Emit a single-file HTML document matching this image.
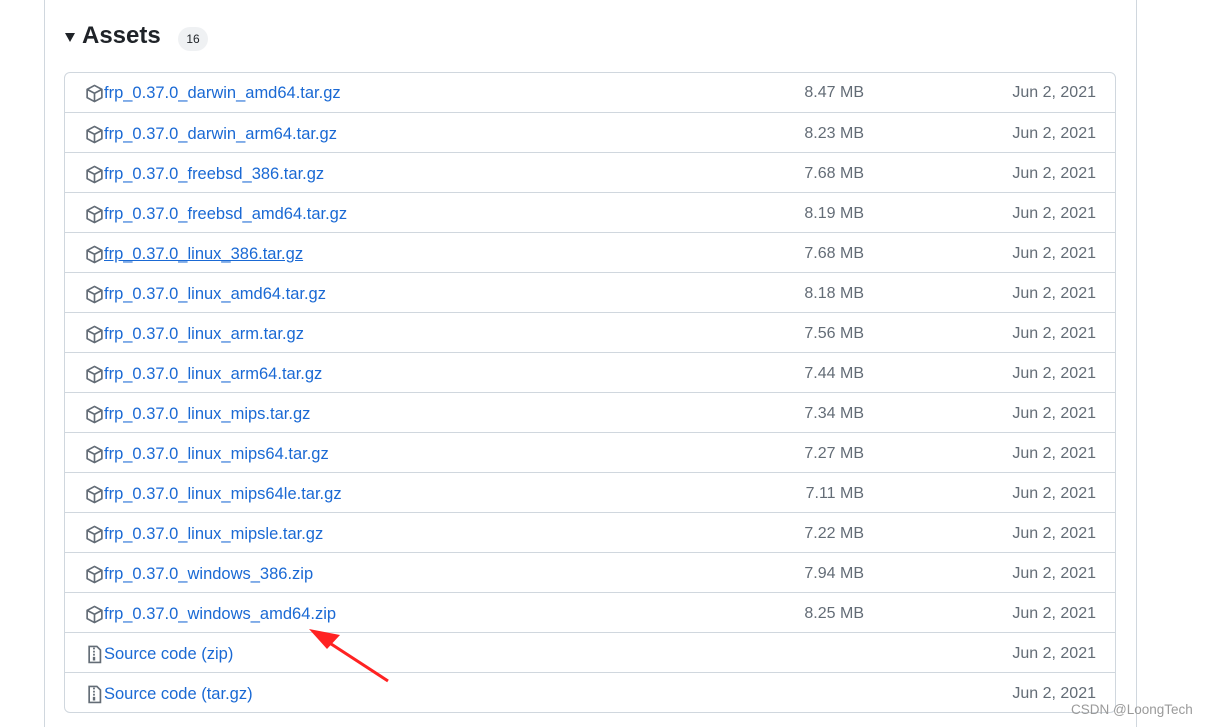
<!DOCTYPE html>
<html><head><meta charset="utf-8"><style>
body{margin:0;width:1212px;height:727px;background:#fff;position:relative;overflow:hidden;font-family:"Liberation Sans",sans-serif;}
.ol{position:absolute;left:44px;top:0;width:1px;height:727px;background:#d0d7de}
.or{position:absolute;left:1136px;top:0;width:1px;height:727px;background:#d0d7de}
.h{position:absolute;left:82px;top:22px;font-size:24px;color:#1f2328;font-weight:600}
.tri{position:absolute;left:65px;top:33px;width:0;height:0;border-left:5px solid transparent;border-right:5px solid transparent;border-top:9px solid #1f2328}
.badge{position:absolute;left:178px;top:27px;width:30px;height:24px;border-radius:12px;background:#eff1f3;font-size:12px;text-align:center;line-height:24px;color:#1f2328}
.box{position:absolute;left:64px;top:72px;width:1050px;height:639px;border:1px solid #d0d7de;border-radius:6px}
.row{position:absolute;left:0;width:1050px;height:40px;border-top:1px solid #d0d7de}
.ic{position:absolute;left:20px;top:12px}
.n{position:absolute;left:39px;top:12px;font-size:16.5px;color:#1a69d4}
.s{position:absolute;right:251px;top:12px;font-size:16px;color:#636c76}
.d{position:absolute;right:19px;top:12px;font-size:16px;color:#636c76}
.wm{position:absolute;left:1071px;top:702px;font-size:13.5px;color:#9a9a9a}
</style></head><body>
<div class="ol"></div><div class="or"></div>
<div class="tri"></div><div class="h">Assets</div>
<div class="badge">16</div>
<div class="box">
<div id="rows"></div>
</div>
<svg width="1212" height="727" style="position:absolute;left:0;top:0">
<line x1="388" y1="681" x2="325" y2="640" stroke="#f22" stroke-width="3"/>
<polygon points="309,629 340,635 327,649" fill="#f22"/>
</svg>
<div class="wm">CSDN @LoongTech</div>
<script>
var pk='<svg class="ic" width="19" height="19" viewBox="0 0 16 16"><path d="M8 1.2 14.2 4.5v7L8 14.8 1.8 11.5v-7Z M1.8 4.5 8 7.8 14.2 4.5 M8 7.8v7" fill="none" stroke="#636c76" stroke-width="1.4" stroke-linejoin="round"/></svg>';
var zp='<svg class="ic" width="19" height="19" viewBox="0 0 16 16"><path d="M3.5 1.2h6.5l3 3v10.5h-9.5z" fill="none" stroke="#636c76" stroke-width="1.4"/><path d="M6.8 2.2h1.5v1.5H6.8zM6.8 4.8h1.5v1.5H6.8zM6.8 7.4h1.5v1.5H6.8zM6.6 10h2v3h-2z" fill="#636c76"/></svg>';
var f=[["darwin_amd64.tar.gz","8.47"],["darwin_arm64.tar.gz","8.23"],["freebsd_386.tar.gz","7.68"],["freebsd_amd64.tar.gz","8.19"],["linux_386.tar.gz","7.68"],["linux_amd64.tar.gz","8.18"],["linux_arm.tar.gz","7.56"],["linux_arm64.tar.gz","7.44"],["linux_mips.tar.gz","7.34"],["linux_mips64.tar.gz","7.27"],["linux_mips64le.tar.gz","7.11"],["linux_mipsle.tar.gz","7.22"],["windows_386.zip","7.94"],["windows_amd64.zip","8.25"]];
var h='';
f.forEach(function(r,i){h+='<div class="row" style="top:'+(i*40-1)+'px;'+(i==0?'border-top:none':'')+'">'+pk+'<div class="n"'+(i==4?' style="text-decoration:underline"':'')+'>frp_0.37.0_'+r[0]+'</div><div class="s">'+r[1]+' MB</div><div class="d">Jun 2, 2021</div></div>';});
h+='<div class="row" style="top:559px">'+zp+'<div class="n">Source code (zip)</div><div class="d">Jun 2, 2021</div></div>';
h+='<div class="row" style="top:599px">'+zp+'<div class="n">Source code (tar.gz)</div><div class="d">Jun 2, 2021</div></div>';
document.getElementById('rows').outerHTML=h;
</script>
</body></html>
